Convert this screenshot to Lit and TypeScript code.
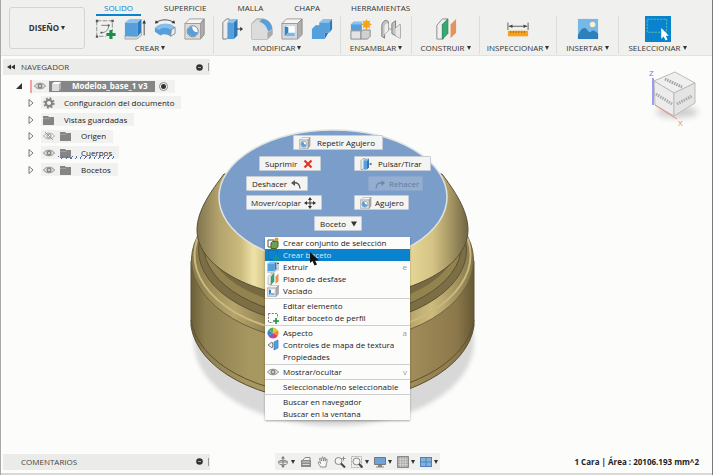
import { LitElement, html, css, svg, nothing, SVGTemplateResult } from "lit";
import { customElement } from "lit/decorators.js";
import { classMap } from "lit/directives/class-map.js";

type Art = SVGTemplateResult;

/* Toolbar icons, drawn in a 24 x 24 box */
const sketchArt: Art = svg`
  <path d="M3 3H20V14M3 3V20H13" fill="none" stroke="#8a8a8a" stroke-dasharray="5 1.5"/>
  <path d="M8 8H16C16 13 13 16 8 16" fill="none" stroke="#777"/>
  <path d="M2 2h2.500v2.500h-2.500zM19 2h2.500v2.500h-2.500zM2 19h2.500v2.500h-2.500zM7 15h2v2h-2zM15 7h2v2h-2z" fill="#555"/>
  <path d="M18.500 13v10M13.500 18h10" stroke="#159247" stroke-width="3.400"/>`;
const extrudeArt: Art = svg`
  <path d="M1 19L14 20L19 15V19L14 23H1Z" fill="#d8d8d8" stroke="#999" stroke-width=".8"/>
  <path d="M1 5L6 1H19L15 5Z" fill="#8cc3ee"/><path d="M1 5H15V20H1Z" fill="#559fdc"/>
  <path d="M15 5L19 1V15L15 20Z" fill="#2f79b9"/>
  <path d="M22 19V4" stroke="#444"/><path d="M20 6L22 2L24 6Z" fill="#333"/>`;
const revolveArt: Art = svg`
  <path d="M2 5C8 1 16 1 22 5" fill="none" stroke="#444"/><path d="M1 6L2 2.500L5 5.500ZM23 6L22 2.500L19 5.500Z" fill="#333"/>
  <path d="M1 11C7 5 17 5 23 10L19 13L18 20C14 17 10 17 7 19L1 15Z" fill="#559fdc"/>
  <path d="M1 11C7 5 17 5 23 10L19 13C14 10 9 10 6 13Z" fill="#86bfee"/>
  <path d="M19 13L23 10V17L18 20Z" fill="#eee" stroke="#888"/>`;
const holeArt: Art = svg`
  <path d="M1 6L6 1H22L18 6Z" fill="#f4f4f4" stroke="#999"/><path d="M18 6L22 1V18L18 23Z" fill="#adadad" stroke="#888"/>
  <path d="M1 6H18V23H1Z" fill="#dcdcdc" stroke="#999"/><circle cx="9.500" cy="14.500" r="6" fill="#fff" stroke="#777"/>
  <path d="M9 9A5.500 5.500 0 1 0 15 15C11 16 9 13 9 9Z" fill="#559fdc"/>`;
const pressArt: Art = svg`
  <path d="M2 5L6 1H9V20L6 23H2Z" fill="#ececec" stroke="#777"/>
  <path d="M7 5L11 1H18L14 5Z" fill="#8cc3ee"/><path d="M7 5H14V23H7Z" fill="#559fdc"/><path d="M14 5L18 1V19L14 23Z" fill="#2f79b9"/>
  <path d="M17 12H22" stroke="#333"/><path d="M21 9.500L24 12L21 14.500Z" fill="#333"/>`;
const filletArt: Art = svg`
  <path d="M1 6L6 1H11C19 1 23 7 23 13V18L18 23H1Z" fill="#d9d9d9" stroke="#999"/>
  <path d="M1 6H7C13 7 17 12 18 16V23H1Z" fill="#dcdcdc"/>
  <path d="M9 4L12 1C19 1 23 7 23 12L19 15C17 9 14 5 9 4Z" fill="#559fdc"/>
  <path d="M18 16L23 13V18L18 23Z" fill="#a9a9a9"/>`;
const shellArt: Art = svg`
  <path d="M1 6L6 1H23L18 6Z" fill="#f4f4f4" stroke="#999"/><path d="M18 6L23 1V18L18 23Z" fill="#adadad" stroke="#888"/>
  <path d="M1 6H18V23H1Z" fill="#d8d8d8" stroke="#999"/><path d="M4 9H15V20H4Z" fill="#fff"/>
  <path d="M4 9L8 10V16L4 20Z" fill="#3383c4"/><path d="M4 20L8 16H15V20Z" fill="#79b7ea"/>`;
const combineArt: Art = svg`
  <path d="M9 5L13 1H23L20 5Z" fill="#8cc3ee"/><path d="M20 5L23 1V12L20 16Z" fill="#2f79b9"/>
  <path d="M1 12L5 8H9V5H20V16H15V23H1Z" fill="#559fdc"/><path d="M15 16L19 16L15 23Z" fill="#2f79b9"/>`;
const componentArt: Art = svg`
  <path d="M1 7L4 4H13V14H1Z" fill="#559fdc"/><path d="M1 7L4 4H14L12 7Z" fill="#8cc3ee"/>
  <path d="M1 14H12V23H1Z" fill="#e3e3e3" stroke="#888"/><path d="M12 15L14 13H22V20L19 23H12Z" fill="#d0d0d0" stroke="#888"/>
  <path d="M18 1l1.300 2.600 2.800-.8-.9 2.700L24 7l-2.800 1.300.9 2.800-2.800-.9L18 13l-1.300-2.800-2.800.9.9-2.800L12 7l2.800-1.500-.9-2.700 2.800.8Z" fill="#f6a21b"/>`;
const jointArt: Art = svg`
  <path d="M2 8C3 3 7 1 9 4V14L5 18V22L2 20Z" fill="#c4c4c4" stroke="#777"/><path d="M5 9C6 5 9 5 9 7V14L5 18Z" fill="#eee"/>
  <path d="M13 6L17 3V11L22 7V22L13 17Z" fill="#c4c4c4" stroke="#777"/><path d="M17 11L22 7V22L17 19Z" fill="#e8e8e8"/>
  <path d="M9 12H13" stroke="#999"/>`;
const planeArt: Art = svg`
  <path d="M2 8L8 1H14L9 8V23H2Z" fill="#f0f0f0" stroke="#888"/>
  <path d="M8 7L14 1V17L8 23Z" fill="#35a873" stroke="#2a8a5c"/><path d="M17 7L23 1V16L17 22Z" fill="#e5935a"/>`;
const measureArt: Art = svg`
  <path d="M1 5V13M23 5V13M2 9H22" stroke="#555" fill="none"/><path d="M2 9L6 7V11ZM22 9L18 7V11Z" fill="#444"/>
  <path d="M1 14H23V20H1Z" fill="#f6a21b"/><path d="M4 14v2.500M7 14v2.500M10 14v2.500M13 14v2.500M16 14v2.500M19 14v2.500" stroke="#a66a08"/>`;
const imageArt: Art = svg`
  <path d="M1 1H23V23H1Z" fill="#75b8ea"/><path d="M1 19C4 13 6 10 9 11C12 13 13 17 15 15C18 12 20 14 23 17V23H1Z" fill="#2f7fba"/>
  <circle cx="17" cy="7" r="3" fill="#fff0c0"/>`;
const selectArt: Art = svg`
  <path d="M0 0H24V24H0Z" fill="#0a83cf"/><path d="M2 3H20V15H2Z" fill="none" stroke="#5fc0a8" stroke-width=".9" stroke-dasharray="2 1"/>
  <path d="M15 11V21L17.300 19L19 22.500L20.800 21.600L19.200 18.200H22Z" fill="#fff"/>`;

/* Small icons, drawn in a 12 x 12 box */
const eyeArt: Art = svg`
  <path d="M.5 6C3 2.300 9 2.300 11.500 6C9 9.700 3 9.700 .5 6Z" fill="#e4e4e4" stroke="#8c8c8c"/>
  <circle cx="6" cy="6" r="2.500" fill="#888"/><circle cx="6" cy="6" r="1" fill="#e4e4e4"/>`;
const eyeOffArt: Art = svg`
  <path d="M.5 6C3 2.300 9 2.300 11.500 6C9 9.700 3 9.700 .5 6Z" fill="none" stroke="#aaa"/>
  <circle cx="6" cy="6" r="2" fill="none" stroke="#999"/><path d="M2 2L10 10" stroke="#999"/>`;
const folderArt: Art = svg`<path d="M0 2H5L6 3H11V11H0Z" fill="#858585"/><path d="M0 4.500H6L7 3.500" stroke="#aaa" stroke-width=".7" fill="none"/>`;
const gearArt: Art = svg`
  <circle cx="6" cy="6" r="3.200" fill="none" stroke="#858585" stroke-width="2.200"/>
  <circle cx="6" cy="6" r="4.900" fill="none" stroke="#858585" stroke-width="1.600" stroke-dasharray="1.900 1.950"/>`;
const cubeArt: Art = svg`
  <path d="M1 4L3 2H10V9L8 11H1Z" fill="#b0b0b0"/><path d="M1 4H8V11H1Z" fill="#dcdcdc"/><path d="M1 4L3 2H10L8 4Z" fill="#fff"/>`;
const setArt: Art = svg`
  <path d="M1 3H7V10H1Z" fill="none" stroke="#555"/><path d="M4 6L5.500 4.500H11V9.500L9.500 11.500H4Z" fill="#6da04f" stroke="#3d6929"/>
  <circle cx="9.500" cy="2.500" r="2" fill="#f0932b"/>`;
const miniSketchArt: Art = svg`
  <path d="M1.500 1.500H10.500V6M1.500 1.500V10.500H6" fill="none" stroke="#777" stroke-dasharray="2 1.300"/>
  <path d="M9 6V12M6 9H12" stroke="#159247" stroke-width="1.600"/>`;
const hotSketchArt: Art = svg`
  <path d="M1.500 1.500H10.500V6M1.500 1.500V10.500H6" fill="none" stroke="#1f67a0" stroke-dasharray="2 1.300"/>
  <path d="M9 6V12M6 9H12" stroke="#159a76" stroke-width="1.600"/>`;
const wheelArt: Art = svg`
  <path d="M6 6V.5A5.500 5.500 0 0 1 10.800 3.300Z" fill="#f4c430"/><path d="M6 6L10.800 3.300A5.500 5.500 0 0 1 10.800 8.700Z" fill="#f28a2e"/>
  <path d="M6 6L10.800 8.700A5.500 5.500 0 0 1 6 11.500Z" fill="#e0405a"/><path d="M6 6V11.500A5.500 5.500 0 0 1 1.200 8.700Z" fill="#9b4fc0"/>
  <path d="M6 6L1.200 8.700A5.500 5.500 0 0 1 1.200 3.300Z" fill="#2f86d6"/><path d="M6 6L1.200 3.300A5.500 5.500 0 0 1 6 .5Z" fill="#4bb356"/>`;
const textureArt: Art = svg`<path d="M5 3L1 6L5 9L6 6Z" fill="#eee" stroke="#777"/><path d="M7 3L11 1V9L7 11Z" fill="#559fdc" stroke="#2f79b9" stroke-width=".7"/>`;
const deleteArt: Art = svg`<path d="M2.500 2.500L9.500 9.500M9.500 2.500L2.500 9.500" stroke="#e2352b" stroke-width="2.200"/>`;
const undoArt: Art = svg`<path d="M3 5C7 4 10 6 10 10.500" fill="none" stroke="#555" stroke-width="1.400"/><path d="M1 5L5 2V8Z" fill="#555"/>`;
const redoArt: Art = svg`<path d="M9 5C5 4 2 6 2 10.500" fill="none" stroke="#6f86a8" stroke-width="1.400"/><path d="M11 5L7.500 2V8Z" fill="#6f86a8"/>`;
const moveArt: Art = svg`<path d="M6 2V10M2 6H10" stroke="#333"/><path d="M6 0L8 3H4ZM6 12L8 9H4ZM0 6L3 4V8ZM12 6L9 4V8Z" fill="#333"/>`;
const caretArt: Art = svg`<path d="M3 3.500H9L6 8.500Z" fill="#333"/>`;
const orbitArt: Art = svg`
  <path d="M6 1V11M1 6H11" stroke="#777"/><ellipse cx="6" cy="6.500" rx="4.500" ry="2.200" fill="none" stroke="#888"/>
  <path d="M6 0L8 2.500H4ZM6 12L8 9.500H4Z" fill="#777"/>`;
const lookArt: Art = svg`<path d="M1 4H11V11H1Z" fill="#8b8b8b"/><path d="M3 4L5 1.500H10V4" fill="none" stroke="#888"/><path d="M2.500 6H9.500M2.500 8.500H9.500" stroke="#d6d6d6"/>`;
const panArt: Art = svg`<path d="M3.500 11C3 9 1 7.500 1 6.500C2 5.500 3 7 3.500 7.500L2.500 2.500C3.500 1.500 4 3 4.600 5L5 1C6 .3 6.400 1.500 6.500 5L7.500 1.500C8.700 1 8.500 3 8.200 5.200L9.500 3C10.800 3 10 6 9.300 8L9 11Z" fill="#f8f8f8" stroke="#777" stroke-width=".8"/>`;
const zoomArt: Art = svg`<circle cx="4.500" cy="5" r="3.500" fill="#f4f4f4" stroke="#888"/><path d="M7 7.500L11 11.500" stroke="#444" stroke-width="2"/><path d="M9.500 .5V4.500M7.800 2.500H11.500" stroke="#777" stroke-width=".8"/>`;
const fitArt: Art = svg`<path d="M.5 .5H10.500V11.500H.5Z" fill="none" stroke="#aaa" stroke-dasharray="2 1"/><circle cx="5.500" cy="5.500" r="3.500" fill="#f4f4f4" stroke="#888"/><path d="M8 8L11.500 11.500" stroke="#444" stroke-width="2"/>`;
const screenArt: Art = svg`<path d="M.5 1.500H11.500V8.500H.5Z" fill="#6fa3d8" stroke="#777"/><path d="M4 9H8V10.500H10V11.500H2V10.500H4Z" fill="#888"/>`;
const gridArt: Art = svg`<path d="M.5 .5H11.500V11.500H.5Z" fill="#a6a6a6" stroke="#888"/><path d="M3.300 1V11M6 1V11M8.700 1V11M1 3.300H11M1 6H11M1 8.700H11" stroke="#dedede" stroke-width=".7"/>`;
const viewsArt: Art = svg`<path d="M0 1H12V11H0Z" fill="#4d80b5"/><path d="M1 2H5.500V5.500H1ZM6.500 2H11V5.500H6.500ZM1 6.500H5.500V10H1ZM6.500 6.500H11V10H6.500Z" fill="#86b1de"/>`;

const big = (art: Art) => html`<svg class="big" viewBox="0 0 24 24" aria-hidden="true">${art}</svg>`;
const fit24 = (art: Art) => html`<svg class="small" viewBox="0 0 24 24" aria-hidden="true">${art}</svg>`;
const small = (art: Art) => html`<svg class="small" viewBox="0 0 12 12" aria-hidden="true">${art}</svg>`;

const base = css`
  * { box-sizing: border-box; }
  button {
    font: inherit; color: inherit; background: none; border: 0; padding: 0; margin: 0;
    white-space: nowrap; cursor: default;
  }
  svg { display: block; flex: none; }
  ul { list-style: none; margin: 0; padding: 0; }
  .small { width: 12px; height: 12px; }
`;

@customElement("tool-ribbon")
class ToolRibbon extends LitElement {
  static styles = [base, css`
    :host { display: flex; height: 56px; background: #f0f0ee; border-bottom: 1px solid #e2e2e0; color: #333; }
    .workspace {
      width: 76px; height: 42px; margin: 7px 2px 0 8px; border: 1px solid #d4d4d2; border-radius: 3px;
      font-weight: 700;
    }
    .main { flex: 1; display: flex; flex-direction: column; }
    .tabs { display: flex; gap: 15px; height: 16px; padding-left: 9px; }
    .tab { padding: 0 8px; height: 16px; line-height: 13px; border-bottom: 2px solid transparent; }
    .tab.on { color: #0a83cf; border-color: #0a83cf; }
    .groups { display: flex; }
    .group {
      display: flex; flex-direction: column; align-items: center; height: 38px;
      border-right: 1px solid #dcdcda;
    }
    .group:last-child { border: 0; }
    .icons { display: flex; gap: 8px; height: 27px; align-items: center; }
    .big { width: 22px; height: 22px; }
    .hot .big { width: 26px; height: 26px; }
    .name { line-height: 12px; }
    .caret {
      display: inline-block; border: 2px solid transparent; border-top: 4px solid #333; border-bottom: 0;
      margin-left: 2px; vertical-align: 1px;
    }
    .w4 { width: 127px; } .w2 { width: 71px; } .w1 { width: 68px; }
    .wide { width: 77px; } .slim { width: 62px; }
  `];

  private tabs = ["SOLIDO", "SUPERFICIE", "MALLA", "CHAPA", "HERRAMIENTAS"];
  private groups = [
    { name: "CREAR", size: "w4", icons: [sketchArt, extrudeArt, revolveArt, holeArt] },
    { name: "MODIFICAR", size: "w4", icons: [pressArt, filletArt, shellArt, combineArt] },
    { name: "ENSAMBLAR", size: "w2", icons: [componentArt, jointArt] },
    { name: "CONSTRUIR", size: "w1", icons: [planeArt] },
    { name: "INSPECCIONAR", size: "wide", icons: [measureArt] },
    { name: "INSERTAR", size: "slim", icons: [imageArt] },
    { name: "SELECCIONAR", size: "wide hot", icons: [selectArt] },
  ];

  render() {
    return html`
      <button class="workspace">DISEÑO<span class="caret"></span></button>
      <div class="main">
        <nav class="tabs">
          ${this.tabs.map((t, i) => html`<button class=${classMap({ tab: true, on: i === 0 })}>${t}</button>`)}
        </nav>
        <div class="groups">
          ${this.groups.map(g => html`
            <div class="group ${g.size}">
              <div class="icons">${g.icons.map(a => html`<button aria-label=${g.name}>${big(a)}</button>`)}</div>
              <button class="name">${g.name}<span class="caret"></span></button>
            </div>`)}
        </div>
      </div>`;
  }
}

@customElement("panel-bar")
class PanelBar extends LitElement {
  static properties = { label: {}, arrows: { type: Boolean } };
  declare label: string;
  declare arrows: boolean;
  static styles = [base, css`
    :host {
      display: flex; align-items: center; width: 207px; height: 16px; padding: 0 1px 0 4px;
      background: #ebebe9; color: #444;
    }
    .lead { width: 14px; }
    .arrows { width: 8px; height: 8px; }
    .title { flex: 1; }
    .dot { width: 7px; height: 7px; margin-right: 5px; }
    .grip { width: 1px; height: 8px; background: #999; }
  `];
  render() {
    return html`
      <span class="lead">${this.arrows ? html`<svg class="arrows" viewBox="0 0 8 8"><path d="M0 4L4 1.500V6.500ZM4 4L8 1.500V6.500Z" fill="#333"/></svg>` : nothing}</span>
      <span class="title">${this.label}</span>
      <svg class="dot" viewBox="0 0 7 7"><circle cx="3.500" cy="3.500" r="3.300" fill="#333"/><path d="M2 3.500H5" stroke="#aaa"/></svg>
      <span class="grip"></span>`;
  }
}

@customElement("model-browser")
class ModelBrowser extends LitElement {
  static styles = [base, css`
    :host { display: block; width: 207px; color: #222; }
    .tree { display: grid; grid-auto-rows: 1fr; height: 100px; margin-top: 3px; }
    .row { display: flex; align-items: center; padding-left: 25px; }
    .root { padding-left: 13px; }
    .twisty { width: 13px; height: 12px; }
    .twisty svg { width: 7px; height: 10px; }
    .chip {
      display: flex; align-items: center; gap: 5px; height: 13px; padding: 0 7px 0 2px; background: #f1f1ef;
    }
    .root .chip { gap: 3px; }
    .text { margin-left: 4px; white-space: nowrap; }
    .mark { width: 2px; height: 13px; margin-left: 1px; background: #f2a3a3; }
    .title {
      display: flex; align-items: center; gap: 9px; height: 11px; width: 106px; padding-left: 2px;
      background: #868686; color: #fff; font-weight: 700;
    }
    .active { appearance: none; width: 9px; height: 9px; margin: 0 0 0 1px; border: 1px solid #888; border-radius: 50%;
      background: radial-gradient(circle, #333 0 2px, #fff 3px); }
    .chip.busy { position: relative; }
    .busy::after {
      content: ""; position: absolute; left: 17px; right: 2px; bottom: 0; height: 3px;
      background: repeating-linear-gradient(120deg, #5a6c9c 0 1px, transparent 1px 4px);
    }
  `];
  private rows = [
    { text: "Configuración del documento", icons: [gearArt] },
    { text: "Vistas guardadas", icons: [folderArt] },
    { text: "Origen", icons: [eyeOffArt, folderArt] },
    { text: "Cuerpos", icons: [eyeArt, folderArt], busy: true },
    { text: "Bocetos", icons: [eyeArt, folderArt] },
  ];
  render() {
    return html`
      <panel-bar label="NAVEGADOR" arrows></panel-bar>
      <ul class="tree">
        <li class="row root">
          <button class="twisty" aria-label="Contraer"><svg viewBox="0 0 7 10"><path d="M6 2V8H0Z" fill="#333"/></svg></button>
          <span class="mark"></span>
          <span class="chip">${small(eyeArt)}<span class="title">${small(cubeArt)}Modeloa_base_1 v3</span>
            <input class="active" type="radio" checked aria-label="Activar componente"></span>
        </li>
        ${this.rows.map(r => html`
          <li class="row">
            <button class="twisty" aria-label="Expandir"><svg viewBox="0 0 7 10"><path d="M1 1.500L5 5L1 8.500Z" fill="#fff" stroke="#777"/></svg></button>
            <span class=${classMap({ chip: true, busy: !!r.busy })}>${r.icons.map(small)}<span class="text">${r.text}</span></span>
          </li>`)}
      </ul>`;
  }
}

@customElement("brass-model")
class BrassModel extends LitElement {
  static styles = [base, css`:host { display: block; } svg { width: 300px; height: 320px; }`];
  render() {
    return html`
      <svg viewBox="182 120 300 320" role="img" aria-label="Modelo">
        <defs>
          <linearGradient id="body" x1="0" x2="1">
            <stop offset="0" stop-color="#6c5f3a"/><stop offset=".05" stop-color="#8c7e50"/><stop offset=".2" stop-color="#a6965f"/>
            <stop offset=".5" stop-color="#b5a269"/><stop offset=".78" stop-color="#a18d59"/><stop offset=".94" stop-color="#8b774a"/>
            <stop offset="1" stop-color="#675935"/>
          </linearGradient>
          <linearGradient id="rim" x1="0" x2="1">
            <stop offset="0" stop-color="#8a7b4b"/><stop offset=".15" stop-color="#b5a46b"/><stop offset=".3" stop-color="#8b7b4c"/>
            <stop offset=".7" stop-color="#a08e59"/><stop offset=".85" stop-color="#cebc7e"/><stop offset="1" stop-color="#85764a"/>
          </linearGradient>
          <linearGradient id="cone" x1="0" x2="1">
            <stop offset="0" stop-color="#81754f"/><stop offset=".08" stop-color="#b2a26c"/><stop offset=".16" stop-color="#cbba7d"/>
            <stop offset=".21" stop-color="#efe2a8"/><stop offset=".26" stop-color="#cfbf82"/><stop offset=".5" stop-color="#d2c184"/>
            <stop offset=".78" stop-color="#e7d898"/><stop offset=".87" stop-color="#d4c384"/><stop offset=".93" stop-color="#aa9a66"/>
            <stop offset="1" stop-color="#6f6544"/>
          </linearGradient>
          <filter id="soft" x="-10%" y="-10%" width="120%" height="120%"><feGaussianBlur stdDeviation="2"/></filter>
        </defs>
        <ellipse cx="334" cy="342" rx="140" ry="84" fill="#d9d8d8" filter="url(#soft)"/>
        <path d="M191 262A142 88 0 0 1 474 262V326A142 83 0 0 1 191 326Z" fill="url(#body)" stroke="#5a5033"/>
        <path d="M191 320A142 83 0 0 0 474 320" fill="none" stroke="#5d5231"/>
        <ellipse cx="332.500" cy="260" rx="141" ry="83" fill="url(#rim)" stroke="#6d6240"/>
        <ellipse cx="332.500" cy="255" rx="138" ry="81" fill="none" stroke="#c9b97e" stroke-width="2"/>
        <ellipse cx="332.500" cy="250" rx="134" ry="76" fill="#7c6e45" stroke="#5d5231"/>
        <ellipse cx="332.500" cy="245" rx="129" ry="73" fill="#93844f" stroke="#5d5231"/>
        <ellipse cx="332.500" cy="239" rx="126" ry="70" fill="#776a43"/>
        <path d="M224 174C212 190 197 210 197 230C197 269 258 299 332 299S468 269 468 230C468 210 454 190 442 174Z" fill="url(#cone)" stroke="#594f35"/>
        <ellipse cx="333" cy="197" rx="114" ry="67" fill="#7b9dca" stroke="#dfe4e2" stroke-width="1.500"/>
      </svg>`;
  }
}

@customElement("marking-menu")
class MarkingMenu extends LitElement {
  static styles = [base, css`
    :host { display: block; position: relative; width: 184px; height: 96px; color: #222; }
    .pill {
      position: absolute; display: flex; align-items: center; gap: 6px; height: 15px; padding: 0 5px;
      background: #f4f4f2; border: 1px solid #c6ccd6; border-radius: 1px;
    }
    .pill:disabled { background: #94aed2; color: #64799b; border-color: #8ba6cd; }
    .repeat { top: 0; left: 47px; width: 90px; }
    .delete { top: 21px; left: 13px; width: 62px; gap: 5px; }
    .press { top: 21px; left: 108px; width: 77px; }
    .undo { top: 41px; left: 0; width: 62px; gap: 3px; }
    .redo { top: 41px; left: 122px; width: 55px; gap: 3px; }
    .move { top: 60px; left: 0; width: 76px; gap: 3px; padding: 0 4px; }
    .hole { top: 60px; left: 108px; width: 55px; gap: 3px; }
    .sketch { top: 81px; left: 68px; width: 48px; gap: 2px; }
  `];
  render() {
    return html`
      <button class="pill repeat">${fit24(holeArt)}Repetir Agujero</button>
      <button class="pill delete">Suprimir${small(deleteArt)}</button>
      <button class="pill press">${fit24(pressArt)}Pulsar/Tirar</button>
      <button class="pill undo">Deshacer${small(undoArt)}</button>
      <button class="pill redo" disabled>${small(redoArt)}Rehacer</button>
      <button class="pill move">Mover/copiar${small(moveArt)}</button>
      <button class="pill hole">${fit24(holeArt)}Agujero</button>
      <button class="pill sketch">Boceto${small(caretArt)}</button>`;
  }
}

@customElement("context-menu")
class ContextMenu extends LitElement {
  static styles = [base, css`
    :host {
      display: block; width: 145px; background: #fcfcfb; color: #222;
      box-shadow: 0 1px 2px #0005;
    }
    .section + .section { border-top: 1px solid #cfcfcf; margin-top: 1px; padding-top: 1px; }
    .item { display: flex; align-items: center; width: 100%; height: 12px; padding: 0 3px 0 2px; gap: 4px; }
    .item.on { background: #0a83cf; color: #d6ecfa; }
    .slot { width: 12px; height: 12px; }
    .text { flex: 1; text-align: left; }
    .key { color: #999; }
  `];
  private sections: { text: string; art?: Art; wide?: boolean; key?: string; on?: boolean }[][] = [
    [
      { text: "Crear conjunto de selección", art: setArt },
      { text: "Crear boceto", art: hotSketchArt, on: true },
      { text: "Extruir", art: extrudeArt, wide: true, key: "e" },
      { text: "Plano de desfase", art: planeArt, wide: true },
      { text: "Vaciado", art: shellArt, wide: true },
    ],
    [{ text: "Editar elemento" }, { text: "Editar boceto de perfil", art: miniSketchArt }],
    [
      { text: "Aspecto", art: wheelArt, key: "a" },
      { text: "Controles de mapa de textura", art: textureArt },
      { text: "Propiedades" },
    ],
    [{ text: "Mostrar/ocultar", art: eyeArt, key: "v" }],
    [{ text: "Seleccionable/no seleccionable" }],
    [{ text: "Buscar en navegador" }, { text: "Buscar en la ventana" }],
  ];
  render() {
    return this.sections.map(s => html`
      <div class="section">
        ${s.map(i => html`
          <button class=${classMap({ item: true, on: !!i.on })}>
            <span class="slot">${i.art ? (i.wide ? fit24(i.art) : small(i.art)) : nothing}</span>
            <span class="text">${i.text}</span>
            ${i.key ? html`<span class="key">${i.key}</span>` : nothing}
          </button>`)}
      </div>`);
  }
}

@customElement("view-cube")
class ViewCube extends LitElement {
  static styles = [base, css`
    :host { display: block; }
    svg { width: 60px; height: 66px; }
    .axis { font-size: 8px; }
    .z { fill: #7777ee; } .x { fill: #f08080; }
  `];
  render() {
    return html`
      <svg viewBox="646 64 60 66">
        <defs><filter id="haze" x="-30%" y="-50%" width="160%" height="200%"><feGaussianBlur stdDeviation="3"/></filter></defs>
        <ellipse cx="678" cy="112" rx="21" ry="6" fill="#cfcfcf" filter="url(#haze)"/>
        <path d="M655 81L676 72L696 83L675 93Z" fill="#efefef" stroke="#bbb"/>
        <path d="M655 81L675 93V116L656 105Z" fill="#ececec" stroke="#bbb"/>
        <path d="M675 93L696 83V103L675 116Z" fill="#e4e4e4" stroke="#bbb"/>
        <path d="M654 78V105" stroke="#7c7cf0" stroke-width="1.500"/><path d="M656 105L678 119" stroke="#ee8a80"/>
        <text class="axis z" x="650" y="76">Z</text><text class="axis x" x="679" y="126">X</text>
        <path d="M666 79L683 87" fill="none" stroke="#a2a2a2" stroke-width="3" stroke-dasharray="1.500 1"/>
        <path d="M657 94L673 104" stroke="#aaa" stroke-width="3" stroke-dasharray="1.500 1"/>
        <path d="M678 104L693 96" stroke="#aaa" stroke-width="3" stroke-dasharray="1.500 1"/>
      </svg>`;
  }
}

@customElement("app-root")
class AppRoot extends LitElement {
  static styles = [base, css`
    :host {
      display: flex; flex-direction: column; box-sizing: border-box; min-height: 100vh; overflow: hidden;
      font: 8px/12px "Open Sans", "Noto Sans", sans-serif; color: #222; background: #fcfcfb;
      border-left: 1px solid #a8a8a8; border-right: 1px solid #77797c;
    }
    .stage { position: relative; flex: 1; min-height: 396px; margin-right: 1px; }
    .browser { position: absolute; left: 2px; top: 3px; }
    .model { position: absolute; top: 64px; left: calc(50% - 174px); }
    .marking { position: absolute; top: 79px; left: calc(50% - 110px); }
    .menu { position: absolute; top: 181px; left: calc(50% - 91px); }
    .cube { position: absolute; top: 8px; right: 6px; }
    .pointer { position: absolute; top: 196px; left: calc(50% - 47px); width: 10px; height: 14px; }
    .foot {
      display: grid; grid-template-columns: 272px 1fr auto; align-items: center; height: 23px;
      padding: 0 13px 2px 2px; border-bottom: 2px solid #d8d8d6;
    }
    .views { display: flex; justify-self: start; align-items: center; gap: 5px; height: 17px; padding: 0 2px; background: #f0f0ef; }
    .view { display: flex; align-items: center; gap: 2px; }
    .caret { border: 2px solid transparent; border-top: 4px solid #333; border-bottom: 0; }
    .status { font-weight: 700; color: #222; }
  `];
  private views = [
    { label: "Órbita", art: orbitArt, more: true }, { label: "Mirar a", art: lookArt }, { label: "Encuadre", art: panArt },
    { label: "Zoom", art: zoomArt }, { label: "Ajustar", art: fitArt, more: true },
    { label: "Visualización", art: screenArt, more: true }, { label: "Rejilla", art: gridArt, more: true },
    { label: "Ventanas", art: viewsArt, more: true },
  ];
  render() {
    return html`
      <tool-ribbon></tool-ribbon>
      <main class="stage">
        <brass-model class="model"></brass-model>
        <model-browser class="browser"></model-browser>
        <view-cube class="cube"></view-cube>
        <marking-menu class="marking"></marking-menu>
        <context-menu class="menu"></context-menu>
        <svg class="pointer" viewBox="0 0 10 14"><path d="M1 0V11L3.500 9L5.500 13.500L8 12.500L6 8.500H10Z" fill="#111"/></svg>
      </main>
      <footer class="foot">
        <panel-bar label="COMENTARIOS"></panel-bar>
        <div class="views">
          ${this.views.map(v => html`<button class="view" aria-label=${v.label}>${small(v.art)}${v.more ? html`<span class="caret"></span>` : nothing}</button>`)}
        </div>
        <span class="status">1 Cara | Área : 20106.193 mm^2</span>
      </footer>`;
  }
}
